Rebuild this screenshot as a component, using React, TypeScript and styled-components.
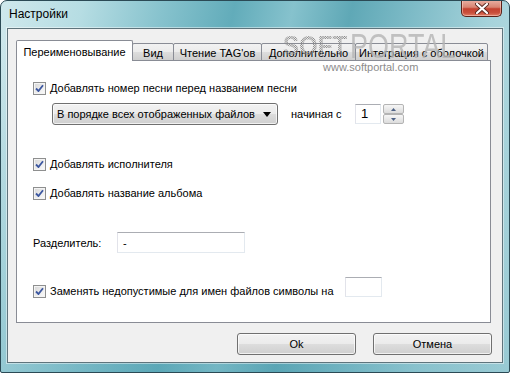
import React from "react";
import styled, { createGlobalStyle } from "styled-components";

const Global = createGlobalStyle`
  html, body { margin: 0; padding: 0; background: #ffffff; }
  body { font-family: "Liberation Sans", Arial, sans-serif; }
  * { box-sizing: border-box; }
`;

const FS = "11px";

const Window = styled.div`
  position: relative;
  width: 510px;
  height: 373px;
  border: 1px solid #2b4a55;
  border-radius: 7px 7px 2px 2px;
  overflow: hidden;
  display: flex;
  flex-direction: column;
  background:
    linear-gradient(180deg, rgba(255,255,255,0) 0px, rgba(255,255,255,0) 40px, rgba(80,160,178,0.35) 373px),
    linear-gradient(102deg, #cfe8ec 0%, #b6dde3 14%, #86c2cd 28%, #62acba 40%, #86c2cd 50%, #5fa8b6 60%, #7cbac6 70%, #a6d3db 84%, #bfe0e5 100%);
`;

const TitleBar = styled.div`
  height: 27px;
  display: flex;
  align-items: flex-start;
  justify-content: space-between;
  padding: 0 7px 0 8px;
  flex: none;
`;

const Title = styled.span`
  font-family: "Liberation Sans", Arial, sans-serif;
  font-size: 12px;
  line-height: 27px;
  color: #000;
`;

const CloseButton = styled.div`
  width: 41px;
  height: 17px;
  margin-top: -1px;
  border: 1px solid #5a2219;
  border-top: none;
  border-radius: 0 0 5px 5px;
  background: linear-gradient(180deg, #eab1a4 0%, #d88472 45%, #c4412f 55%, #c9503c 80%, #e07e66 100%);
  box-shadow: inset 0 0 0 1px rgba(255,220,210,0.5);
  display: flex;
  align-items: center;
  justify-content: center;
`;

const Client = styled.div`
  flex: 1;
  margin: 0 6px 9px 6px;
  border: 1px solid #5f747c;
  box-shadow: 0 0 0 1px rgba(255,255,255,0.45);
  background: #f0f0f0;
  padding: 11px 11px 7px 8px;
  display: flex;
  flex-direction: column;
`;

const TabStrip = styled.div`
  display: flex;
  align-items: flex-end;
  height: 21px;
  position: relative;
  z-index: 1;
`;

const Tab = styled.div<{ $w: number; $active?: boolean }>`
  width: ${(p) => p.$w}px;
  height: ${(p) => (p.$active ? 21 : 18)}px;
  margin-left: ${(p) => (p.$active ? 0 : -1)}px;
  border: 1px solid #898c95;
  border-bottom: ${(p) => (p.$active ? "none" : "1px solid #898c95")};
  border-radius: 2px 2px 0 0;
  background: ${(p) =>
    p.$active ? "#ffffff" : "linear-gradient(180deg, #f2f2f2 0%, #ebebeb 50%, #dddddd 51%, #cfcfcf 100%)"};
  font-size: ${FS};
  color: #000;
  display: flex;
  align-items: center;
  justify-content: center;
  padding-top: 1px;
  white-space: nowrap;
  &:first-child { margin-left: 0; }
`;

const TabPanel = styled.div`
  margin-top: -1px;
  height: 263px;
  border: 1px solid #898c95;
  background: #ffffff;
  padding: 20px 0 0 16px;
  display: flex;
  flex-direction: column;
`;

const Row = styled.div<{ $mt: number; $indent?: number; $align?: string }>`
  display: flex;
  align-items: ${(p) => p.$align || "center"};
  margin-top: ${(p) => p.$mt}px;
  margin-left: ${(p) => p.$indent || 0}px;
`;

const CheckLabel = styled.label<{ $mt?: number; $w?: number }>`
  display: flex;
  align-items: center;
  gap: 4px;
  height: 14px;
  width: ${(p) => (p.$w ? `${p.$w}px` : "auto")};
  margin-top: ${(p) => p.$mt || 0}px;
  font-size: ${FS};
  color: #000;
  white-space: nowrap;
`;

const Box = styled.span`
  width: 13px;
  height: 13px;
  border: 1px solid #8e8f8f;
  background: linear-gradient(135deg, #d6d6d6 0%, #eeeeee 60%, #fbfbfb 100%);
  box-shadow: inset 0 0 0 1px #f4f4f4;
  display: flex;
  align-items: center;
  justify-content: center;
  flex: none;
`;

const Text = styled.span<{ $ml?: number; $w?: number }>`
  font-size: ${FS};
  color: #000;
  margin-left: ${(p) => p.$ml || 0}px;
  width: ${(p) => (p.$w ? `${p.$w}px` : "auto")};
  flex: none;
  white-space: nowrap;
`;

const Combo = styled.div`
  width: 226px;
  height: 22px;
  border: 1px solid #707070;
  border-radius: 3px;
  background: linear-gradient(180deg, #f2f2f2 0%, #ebebeb 50%, #dddddd 51%, #cfcfcf 100%);
  box-shadow: inset 0 0 0 1px rgba(255,255,255,0.7);
  display: flex;
  align-items: center;
  justify-content: space-between;
  padding: 0 6px 0 4px;
  font-size: ${FS};
  color: #000;
  white-space: nowrap;
  flex: none;
`;

const Arrow = styled.span`
  width: 0;
  height: 0;
  border-left: 4px solid transparent;
  border-right: 4px solid transparent;
  border-top: 5px solid #000;
`;

const Input = styled.div<{ $w: number; $h?: number; $ml?: number }>`
  width: ${(p) => p.$w}px;
  height: ${(p) => p.$h || 21}px;
  margin-left: ${(p) => p.$ml || 0}px;
  border: 1px solid;
  border-color: #abadb3 #e3e9ef #e3e9ef #e2e3ea;
  background: #ffffff;
  font-size: ${FS};
  color: #000;
  padding: 0 0 0 5px;
  display: flex;
  align-items: center;
  flex: none;
`;

const BigInput = styled(Input)`
  font-size: 13px;
  align-items: flex-start;
  padding-top: 1px;
`;

const Spinner = styled.div`
  display: flex;
  flex-direction: column;
  margin-left: 2px;
`;

const SpinButton = styled.div`
  width: 21px;
  height: 10px;
  border: 1px solid #b4b4b4;
  border-radius: 2px;
  background: linear-gradient(180deg, #f6f6f6 0%, #e9e9e9 50%, #dcdcdc 100%);
  display: flex;
  align-items: center;
  justify-content: center;
`;

const ButtonRow = styled.div`
  display: flex;
  justify-content: flex-end;
  gap: 17px;
  margin-top: 10px;
  margin-right: -1px;
`;

const Button = styled.div`
  width: 119px;
  height: 22px;
  border: 1px solid #707070;
  border-radius: 3px;
  background: linear-gradient(180deg, #f2f2f2 0%, #ebebeb 50%, #dddddd 51%, #cfcfcf 100%);
  box-shadow: inset 0 0 0 1px rgba(255,255,255,0.7);
  display: flex;
  align-items: center;
  justify-content: center;
  font-size: ${FS};
  color: #000;
`;

const Watermark = styled.div`
  position: absolute;
  left: 282px;
  top: 26px;
  pointer-events: none;
  display: flex;
  flex-direction: column;
  z-index: 5;
`;

const LogoLine = styled.div`
  display: flex;
  align-items: flex-end;
  height: 32px;
`;

const Soft = styled.span`
  display: inline-block;
  font-family: "Liberation Sans", Arial, sans-serif;
  font-weight: bold;
  font-size: 28px;
  line-height: 28px;
  transform: scaleX(0.86);
  transform-origin: left bottom;
  margin-right: -8px;
  margin-bottom: -1px;
  color: transparent;
  background: conic-gradient(#8a8a8a 25%, transparent 0 50%, #8a8a8a 0 75%, transparent 0) 0 0 / 2px 2px;
  -webkit-background-clip: text;
  background-clip: text;
`;

const Portal = styled.span`
  display: inline-block;
  font-family: "Liberation Sans", Arial, sans-serif;
  font-size: 35px;
  line-height: 30px;
  transform: scaleX(0.77);
  transform-origin: left bottom;
  color: rgba(180,180,180,0.8);
  margin-bottom: -2px;
`;

const Site = styled.span`
  font-family: "Liberation Sans", Arial, sans-serif;
  font-size: 11px;
  color: #8c8c8c;
  margin: 2px 0 0 40px;
  text-shadow: 0 0 1px #ffffff, 0 0 1px #ffffff;
`;

const Check = () => (
  <Box>
    <svg width="9" height="9" viewBox="0 0 9 9">
      <path d="M1 4.5 L3.5 7 L8 1.2" fill="none" stroke="#3c57a0" strokeWidth="1.8" strokeLinejoin="round" />
    </svg>
  </Box>
);

const tabs = [
  { label: "Переименовывание", w: 117, active: true },
  { label: "Вид", w: 42 },
  { label: "Чтение TAG'ов", w: 89 },
  { label: "Дополнительно", w: 95 },
  { label: "Интеграция с оболочкой", w: 133 },
];

export default function App() {
  return (
    <>
      <Global />
      <Window>
        <TitleBar>
          <Title>Настройки</Title>
          <CloseButton>
            <svg width="14" height="11" viewBox="0 0 14 11">
              <path d="M2 1 L12 10 M12 1 L2 10" stroke="#5a2a22" strokeWidth="4" strokeLinecap="round" />
              <path d="M2 1 L12 10 M12 1 L2 10" stroke="#ffffff" strokeWidth="2.2" strokeLinecap="round" />
            </svg>
          </CloseButton>
        </TitleBar>
        <Client>
          <TabStrip>
            {tabs.map((t) => (
              <Tab key={t.label} $w={t.w} $active={t.active}>
                {t.label}
              </Tab>
            ))}
          </TabStrip>
          <TabPanel>
            <Row $mt={0}>
              <CheckLabel>
                <Check />
                Добавлять номер песни перед названием песни
              </CheckLabel>
            </Row>
            <Row $mt={8} $indent={19}>
              <Combo>
                <span>В порядке всех отображенных файлов</span>
                <Arrow />
              </Combo>
              <Text $ml={13} $w={64}>начиная с</Text>
              <BigInput $w={26} $h={20}>1</BigInput>
              <Spinner>
                <SpinButton>
                  <svg width="5" height="3" viewBox="0 0 5 3"><path d="M0 3 L2.5 0 L5 3 Z" fill="#4d6185" /></svg>
                </SpinButton>
                <SpinButton>
                  <svg width="5" height="3" viewBox="0 0 5 3"><path d="M0 0 L2.5 3 L5 0 Z" fill="#4d6185" /></svg>
                </SpinButton>
              </Spinner>
            </Row>
            <Row $mt={32}>
              <CheckLabel>
                <Check />
                Добавлять исполнителя
              </CheckLabel>
            </Row>
            <Row $mt={15}>
              <CheckLabel>
                <Check />
                Добавлять название альбома
              </CheckLabel>
            </Row>
            <Row $mt={32}>
              <Text $w={84}>Разделитель:</Text>
              <Input $w={128}>-</Input>
            </Row>
            <Row $mt={24} $align="flex-start">
              <CheckLabel $mt={7} $w={312}>
                <Check />
                Заменять недопустимые для имен файлов символы на
              </CheckLabel>
              <Input $w={37} $h={20} />
            </Row>
          </TabPanel>
          <ButtonRow>
            <Button>Ok</Button>
            <Button>Отмена</Button>
          </ButtonRow>
        </Client>
        <Watermark>
          <LogoLine>
            <Soft>SOFT</Soft>
            <Portal>PORTAL</Portal>
          </LogoLine>
          <Site>www.softportal.com</Site>
        </Watermark>
      </Window>
    </>
  );
}
